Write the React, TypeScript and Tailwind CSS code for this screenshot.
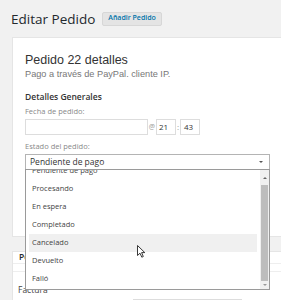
export default function App() {
  const options = ['Pendiente de pago', 'Procesando', 'En espera', 'Completado', 'Cancelado', 'Devuelto', 'Falló'];

  return (
    <div className="relative w-[281px] h-[300px] overflow-hidden bg-[#f1f1f1] font-['Open_Sans',sans-serif]">
      {/* header */}
      <div className="flex items-center h-[37px] pl-[11px]">
        <h1 className="text-[13.5px] leading-[16px] text-[#23282d]">Editar Pedido</h1>
        <span className="ml-[7px] h-[14px] px-[5px] flex items-center bg-[#e4e4e4] border border-[#d7d7d7] rounded-[2px] text-[7px] font-semibold text-[#0073aa]">
          Añadir Pedido
        </span>
      </div>

      {/* order data panel */}
      <div className="ml-[12px] h-[200px] bg-white border border-[#e5e5e5] border-r-0 pl-[12px] pt-[15px]">
        <h2 className="font-['Liberation_Sans',Arial,sans-serif] text-[12.5px] leading-[15px] text-[#333]">Pedido 22 detalles</h2>
        <p className="font-['Liberation_Sans',Arial,sans-serif] text-[9.2px] leading-[12px] text-[#777]">Pago a través de PayPal. cliente IP.</p>

        <h3 className="mt-[11px] text-[8.5px] leading-[11px] font-semibold text-[#333]">Detalles Generales</h3>

        <div className="mt-[4px] text-[7.5px] leading-[10px] text-[#888]">Fecha de pedido:</div>
        <div className="mt-[3px] flex items-center h-[16px] text-[8px] text-[#333]">
          <div className="w-[123px] h-full border border-[#ddd] bg-white" />
          <span className="w-[8px] text-center text-[7px] text-[#999]">@</span>
          <div className="w-[20px] h-full border border-[#ddd] pl-[2px] flex items-center">21</div>
          <span className="w-[4px] text-center text-[#999]">:</span>
          <div className="w-[20px] h-full border border-[#ddd] pl-[3px] flex items-center">43</div>
        </div>

        <div className="mt-[6px] text-[7.5px] leading-[10px] text-[#888]">Estado del pedido:</div>
        <div className="relative mt-[3px] w-[245px] h-[16px] border border-[#b4b4b4] bg-white flex items-center pl-[4px] text-[8.5px] text-[#333]">
          Pendiente de pago
          <span className="absolute right-[6px] top-[6px] w-0 h-0 border-l-[2px] border-r-[2px] border-t-[2px] border-l-transparent border-r-transparent border-t-[#555]" />

          {/* open dropdown */}
          <div className="absolute z-10 left-[-1px] top-[14px] w-[245px] h-[121px] border border-[#9a9a9a] bg-white flex">
            <div className="flex-1 overflow-hidden">
              <div className="-mt-[8px] px-[3px]">
                {options.map((o) => (
                  <div
                    key={o}
                    className={
                      'h-[18px] flex items-center pl-[3px] text-[7.5px] text-[#444] ' +
                      (o === 'Cancelado' ? 'bg-[#f0f0f0]' : '')
                    }
                  >
                    {o}
                  </div>
                ))}
              </div>
            </div>
            <div className="w-[9px] bg-[#f0f0f0] flex flex-col items-center">
              <div className="h-[15px] flex items-center justify-center">
                <span className="w-0 h-0 border-l-[2px] border-r-[2px] border-b-[2px] border-l-transparent border-r-transparent border-b-[#666]" />
              </div>
              <div className="flex-1 w-[7px] bg-[#bdbdbd]" />
              <div className="h-[8px] flex items-center justify-center">
                <span className="w-0 h-0 border-l-[2px] border-r-[2px] border-t-[2px] border-l-transparent border-r-transparent border-t-[#999]" />
              </div>
            </div>
          </div>
        </div>
      </div>

      {/* second panel */}
      <div className="mt-[14px] ml-[12px] h-[60px] bg-white border border-[#e5e5e5] border-r-0">
        <div className="h-[12px] pl-[6px] border-b border-[#eee] flex items-center text-[8.5px] font-semibold text-[#23282d]">
          Pedido
        </div>
        <div className="h-[8px] border-b border-[#eee]" />
        <div className="mt-[12px] pl-[5px] text-[8.5px] leading-[12px] text-[#444]">Factura</div>
        <div className="mt-[3px] ml-[120px] w-[109px] h-[12px] border border-[#ddd]" />
      </div>

      {/* mouse pointer */}
      <svg className="absolute left-[137px] top-[245px] z-20" width="9" height="13" viewBox="0 0 9 13">
        <path d="M0.5 0.5 L0.5 10.5 L3 8.2 L4.8 12.2 L6.3 11.5 L4.6 7.6 L7.8 7.6 Z" fill="#fff" stroke="#222" strokeWidth="0.9" strokeLinejoin="round" />
      </svg>
    </div>
  );
}
